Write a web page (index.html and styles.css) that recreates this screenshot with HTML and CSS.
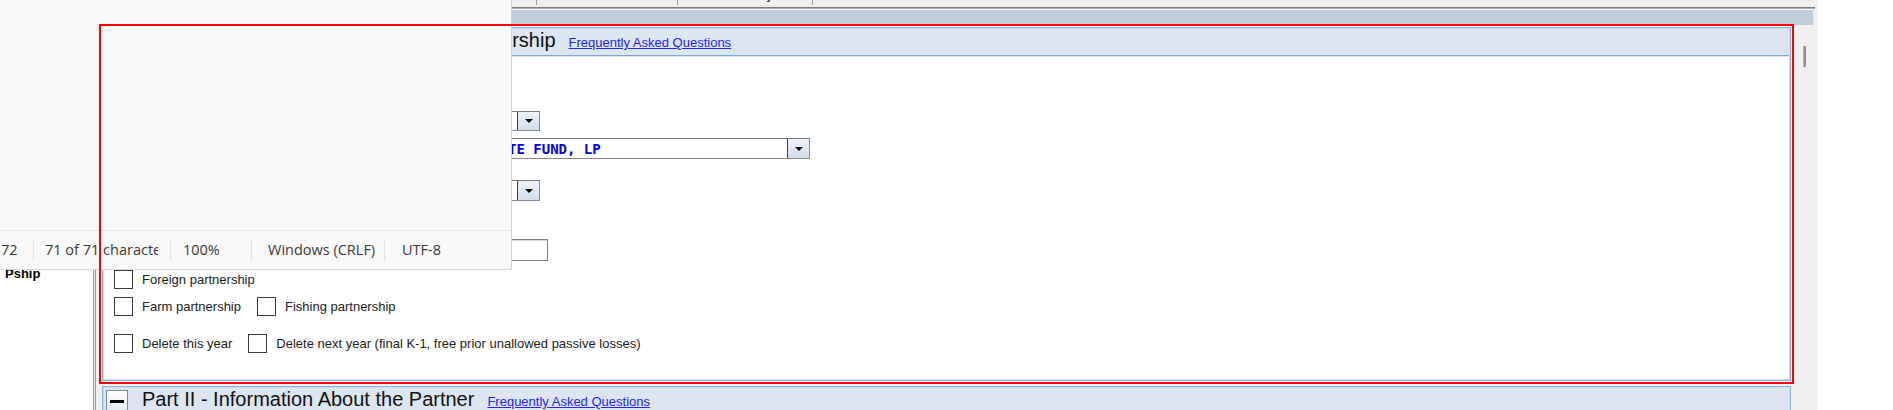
FILE: index.html
```html
<!DOCTYPE html>
<html lang="en">
<head>
<meta charset="utf-8">
<title>K-1 Partnership</title>
<link rel="stylesheet" href="styles.css">
</head>
<body>
<div class="app">
  <aside class="nav">
    <ul class="nav-list">
      <li class="nav-item nav-item--active">Pship</li>
    </ul>
  </aside>
  <div class="split"></div>
  <main class="main">
    <div class="tabs">
      <div class="tab tab--w0">Partnership</div>
      <div class="tab tab--w1">Federal</div>
      <div class="tab tab--w2">Summary</div>
    </div>
    <div class="tabline"></div>
    <div class="band"></div>
    <div class="scroller">
      <div class="content">
        <section class="part">
          <header class="part-hdr">
            <span class="toggle"><span class="minus"></span></span>
            <h2 class="part-title part-title--indent">Part I - Information About the Partnership</h2>
            <a class="faq" href="#">Frequently Asked Questions</a>
          </header>
          <div class="part-body">
            <div class="frow">
              <div class="combo combo--short">
                <div class="combo-input"></div>
                <div class="combo-btn"><span class="tri"></span></div>
              </div>
            </div>
            <div class="frow frow--r2">
              <div class="combo combo--long combo--tall">
                <div class="combo-input combo-input--name">OAK RIDGE ALPHA PRIVATE FUND, LP</div>
                <div class="combo-btn"><span class="tri"></span></div>
              </div>
            </div>
            <div class="frow frow--r3">
              <div class="combo combo--short combo--tall">
                <div class="combo-input"></div>
                <div class="combo-btn"><span class="tri"></span></div>
              </div>
            </div>
            <div class="frow frow--r4">
              <div class="textbox"></div>
            </div>
            <div class="cbrow cbrow--a">
              <span class="cb"><span class="cb-box"></span><span class="cb-label">Foreign partnership</span></span>
            </div>
            <div class="cbrow cbrow--b">
              <span class="cb"><span class="cb-box"></span><span class="cb-label">Farm partnership</span></span>
              <span class="cb"><span class="cb-box"></span><span class="cb-label">Fishing partnership</span></span>
            </div>
            <div class="cbrow cbrow--c">
              <span class="cb"><span class="cb-box"></span><span class="cb-label">Delete this year</span></span>
              <span class="cb"><span class="cb-box"></span><span class="cb-label">Delete next year (final K-1, free prior unallowed passive losses)</span></span>
            </div>
          </div>
        </section>
        <section class="part part--next">
          <header class="part-hdr">
            <span class="toggle"><span class="minus"></span></span>
            <h2 class="part-title">Part II - Information About the Partner</h2>
            <a class="faq" href="#">Frequently Asked Questions</a>
          </header>
        </section>
      </div>
      <div class="vscroll"><div class="thumb"></div></div>
    </div>
  </main>
</div>

<div class="notepad">
  <div class="np-text"></div>
  <div class="np-status">
    <div class="np-field np-field--pos">72</div>
    <div class="np-field np-field--chars"><span class="np-clip">71 of 71 characters</span></div>
    <div class="np-field np-field--zoom">100%</div>
    <div class="np-field np-field--eol">Windows (CRLF)</div>
    <div class="np-field np-field--enc">UTF-8</div>
  </div>
</div>

<div class="highlight"></div>
</body>
</html>
```

FILE: styles.css
```css
* { box-sizing: border-box; }

body {
  margin: 0;
  width: 1893px;
  height: 410px;
  overflow: hidden;
  background: #ffffff;
  font-family: "Liberation Sans", Arial, sans-serif;
  position: relative;
}

.app {
  display: flex;
  height: 410px;
}

/* left navigation */
.nav {
  width: 94px;
  border-right: 1px solid #a0a0a0;
  background: #ffffff;
  padding: 266px 0 0 5px;
}
.nav-list {
  list-style: none;
  margin: 0;
  padding: 0;
}
.nav-item {
  font-size: 13px;
  line-height: 16px;
  color: #000;
}
.nav-item--active { font-weight: bold; }

.split {
  width: 1px;
  background: #e4e4e4;
}

/* main pane */
.main {
  width: 1722px;
  border-left: 1px solid #a0a0a0;
  background: #f0f0f0;
  display: flex;
  flex-direction: column;
}

.tabs {
  height: 7px;
  display: flex;
  align-items: flex-start;
}
.tab {
  height: 5px;
  border-right: 1px solid #a0a0a0;
  display: flex;
  align-items: flex-end;
  justify-content: center;
  overflow: hidden;
  font-size: 12px;
  line-height: 20px;
  color: #000;
}
.tab--w0 { width: 441px; }
.tab--w1 { width: 141px; }
.tab--w2 { width: 135px; padding-left: 4px; }

.tabline {
  height: 2px;
  margin-right: 2px;
  background: linear-gradient(#7c7c7c 50%, #a6a6a6 50%);
}
.band {
  height: 16px;
  margin-right: 3px;
  border-top: 1px solid #ffffff;
  border-right: 1px solid #e2e6ec;
  background: #c1cdda;
}

.scroller {
  flex: 1;
  display: flex;
  min-height: 0;
}
.content {
  width: 1697px;
  padding-top: 2px;
}
.vscroll {
  width: 24px;
  padding: 21px 0 0 10px;
}
.thumb {
  width: 3px;
  height: 21px;
  background: #8e8e8e;
  border-left: 1px solid #b4b4b4;
}

/* sections */
.part {
  margin-left: 6px;
  width: 1689px;
  border: 1px solid #8fb2de;
  padding: 1px;
  background: #cbdbef;
}
.part--next { margin-top: 5px; }

.part-hdr {
  height: 27px;
  display: flex;
  align-items: baseline;
  padding: 0 2px;
  background: #dce6f1;
  border-bottom: 1px solid #7fa6d7;
}
.toggle {
  align-self: center;
  width: 22px;
  height: 22px;
  border: 1px solid #7d8a99;
  background: linear-gradient(#ffffff, #e4ebf3);
  display: flex;
  align-items: center;
  justify-content: center;
}
.minus {
  width: 14px;
  height: 3px;
  background: #000;
}
.part-title {
  margin: 0 0 0 14px;
  font-size: 20px;
  line-height: 22px;
  font-weight: normal;
  color: #111;
  white-space: nowrap;
}
.part-title--indent { margin-left: 64px; }
.faq {
  margin-left: 13px;
  font-size: 13px;
  line-height: 16px;
  color: #2424ff;
  text-decoration: underline;
  white-space: nowrap;
}

.part-body {
  height: 323px;
  background: #ffffff;
  border-top: 1px solid #d4e2f3;
  padding: 54px 0 0 10px;
  display: flex;
  flex-direction: column;
}

/* field column: the label column to its left is empty */
.frow {
  display: flex;
  align-items: center;
  padding-left: 213px;
}
.frow--r2 { margin-top: 7px; }
.frow--r3 { margin-top: 21px; }
.frow--r4 { margin-top: 38px; }

.combo {
  display: flex;
  height: 20px;
  border: 1px solid #8a8a8a;
  border-top-color: #7a7a7a;
  background: #ffffff;
}
.combo--tall { height: 21px; }
.combo--short { width: 213px; }
.combo--long { width: 483px; }
.combo-input {
  flex: 1;
  padding: 0 3px;
  display: flex;
  align-items: center;
  overflow: hidden;
  white-space: nowrap;
}
.combo-input--name {
  font-family: "DejaVu Sans Mono", monospace;
  font-weight: bold;
  font-size: 14px;
  color: #0000ff;
}
.combo-btn {
  width: 22px;
  border-left: 1px solid #3c3c3c;
  background: linear-gradient(#eef3f9, #d2deec);
  display: flex;
  align-items: center;
  justify-content: center;
}
.tri {
  width: 0;
  height: 0;
  border-left: 4px solid transparent;
  border-right: 4px solid transparent;
  border-top: 4px solid #000;
}

.textbox {
  width: 221px;
  height: 22px;
  border: 1px solid #7c7c7c;
  box-shadow: inset 1px 1px 0 #d6d6d6;
  background: #fff;
}

.cbrow {
  display: flex;
  align-items: center;
  gap: 16px;
}
.cbrow--a { margin-top: 9px; }
.cbrow--b { margin-top: 8px; }
.cbrow--c { margin-top: 18px; }

.cb {
  display: flex;
  align-items: center;
  gap: 9px;
}
.cb-box {
  width: 19px;
  height: 19px;
  border: 1px solid #3c3c3c;
  background: #fff;
}
.cb-label {
  font-size: 13px;
  line-height: 19px;
  color: #222;
  white-space: nowrap;
}

/* notepad window lying over the app */
.notepad {
  position: absolute;
  left: 0;
  top: 0;
  width: 512px;
  height: 270px;
  background: #f9f9f9;
  border-right: 1px solid #d0d0d0;
  border-bottom: 1px solid #d8d8d8;
  display: flex;
  flex-direction: column;
  z-index: 2;
}
.np-text { flex: 1; }
.np-status {
  height: 39px;
  border-top: 1px solid #e6e6e6;
  display: flex;
  align-items: center;
  font-family: "Open Sans", "Noto Sans", sans-serif;
  font-size: 14.5px;
  color: #3a3a3a;
}
.np-field {
  height: 22px;
  line-height: 22px;
  border-right: 1px solid #e2e2e2;
  white-space: nowrap;
  overflow: hidden;
}
.np-field--pos { width: 34px; padding-left: 1px; }
.np-field--chars { width: 137px; padding-left: 11px; }
.np-clip {
  display: block;
  width: 113px;
  overflow: hidden;
}
.np-field--zoom { width: 81px; padding-left: 12px; }
.np-field--eol { width: 133px; padding-left: 16px; }
.np-field--enc { border-right: 0; padding-left: 17px; }

.highlight {
  position: absolute;
  left: 99px;
  top: 24px;
  width: 1695px;
  height: 360px;
  border: 2px solid #ff0000;
  z-index: 3;
  pointer-events: none;
}
```
